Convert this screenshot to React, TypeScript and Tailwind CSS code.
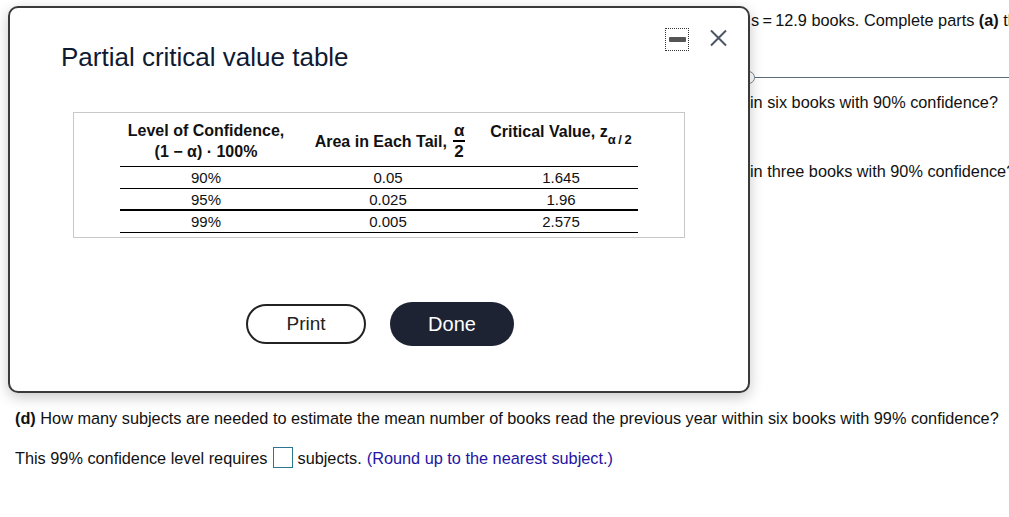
import React from "react";

const rows = [
  { level: "90%", area: "0.05", z: "1.645", rule: "border-b border-black" },
  { level: "95%", area: "0.025", z: "1.96", rule: "border-b-2 border-black" },
  { level: "99%", area: "0.005", z: "2.575", rule: "border-b border-black" },
];

function BackgroundPage() {
  return (
    <div className="flex flex-col text-[16.3px] leading-[18px] text-[#111] whitespace-nowrap">
      <div className="pl-[751px] pt-[11px]">
        s{"\u2009"}={"\u2009"}12.9 books. Complete parts <b>(a)</b> th
      </div>
      <div className="relative ml-[750px] mt-[48px] h-px bg-[#5d6b78]">
        <span className="absolute -left-[8px] -top-[6px] w-[13px] h-[13px] rounded-full border border-[#7a8794] bg-white" />
      </div>
      <div className="pl-[750px] mt-[15px]">in six books with 90% confidence?</div>
      <div className="pl-[750px] mt-[51px]">in three books with 90% confidence?</div>
      <div className="pl-[15px] mt-[229px]">
        <b>(d)</b> How many subjects are needed to estimate the mean number of books read the previous year within six books with 99% confidence?
      </div>
      <div className="pl-[15px] mt-[20px] flex items-center">
        <span>This 99% confidence level requires</span>
        <span className="inline-block w-[20px] h-[21px] border border-[#2b7592] mx-[5px] bg-white" />
        <span>subjects.</span>
        <span className="ml-[5px] text-[#2414a3]">(Round up to the nearest subject.)</span>
      </div>
    </div>
  );
}

function Dialog() {
  return (
    <div className="absolute left-[8px] top-[6px] w-[742px] h-[387px] bg-white border-2 border-[#3a3a3a] rounded-[10px] shadow-[0_4px_14px_rgba(0,0,0,0.22)] flex flex-col">
      <div className="flex justify-between items-start pl-[51px] pr-[21px] pt-[20px]">
        <h1 className="mt-[14px] text-[26px] leading-[30px] text-[#0f1a33]">Partial critical value table</h1>
        <div className="flex items-start gap-[21px]">
          <div className="w-[24px] h-[23px] border border-dotted border-[#333] flex items-center justify-center">
            <div className="w-[17px] h-[5px] bg-[#555] rounded-[1px]" />
          </div>
          <svg className="mt-[1px]" width="17" height="18" viewBox="0 0 17 18" fill="none" stroke="#4b5563" strokeWidth="2">
            <path d="M1 1.5 16 16.5M16 1.5 1 16.5" />
          </svg>
        </div>
      </div>

      <div className="ml-[63px] mt-[40px] w-[612px] h-[126px] border border-[#c8c8c8] pt-[6px] pl-[46px]">
        <div className="w-[518px] text-[#111]">
          <div className="grid grid-cols-[172px_192px_154px] h-[48px] items-center border-b border-black text-[16px] font-bold leading-[21px]">
            <div className="text-center -mt-[4px]">
              <div>Level of Confidence,</div>
              <div>(1 − α) · 100%</div>
            </div>
            <div className="flex items-center justify-center -mt-[4px] pl-[4px]">
              <span className="mt-[2px]">Area in Each Tail,</span>
              <span className="ml-[6px] inline-flex flex-col items-center text-[17px] leading-[17px]">
                <span className="px-[1px] border-b-2 border-black pb-[1px]">α</span>
                <span className="pt-[1px]">2</span>
              </span>
            </div>
            <div className="text-center -mt-[22px] whitespace-nowrap">
              Critical Value, z<sub className="text-[13px] align-[-4px]">α{"\u2009"}/{"\u2009"}2</sub>
            </div>
          </div>
          {rows.map((r) => (
            <div key={r.level} className={`grid grid-cols-[172px_192px_154px] h-[22px] items-center text-[15px] ${r.rule}`}>
              <div className="text-center">{r.level}</div>
              <div className="text-center">{r.area}</div>
              <div className="text-center">{r.z}</div>
            </div>
          ))}
        </div>
      </div>

      <div className="flex items-center gap-[24px] ml-[236px] mt-[64px]">
        <button className="w-[120px] h-[40px] border-2 border-[#222] rounded-full text-[19px] text-[#222] bg-white">Print</button>
        <button className="w-[124px] h-[44px] rounded-full bg-[#1d2333] text-white text-[20px]">Done</button>
      </div>
    </div>
  );
}

export default function App() {
  return (
    <div className="relative w-[1009px] h-[517px] overflow-hidden bg-white font-['Liberation_Sans',Arial,sans-serif]">
      <BackgroundPage />
      <Dialog />
    </div>
  );
}
